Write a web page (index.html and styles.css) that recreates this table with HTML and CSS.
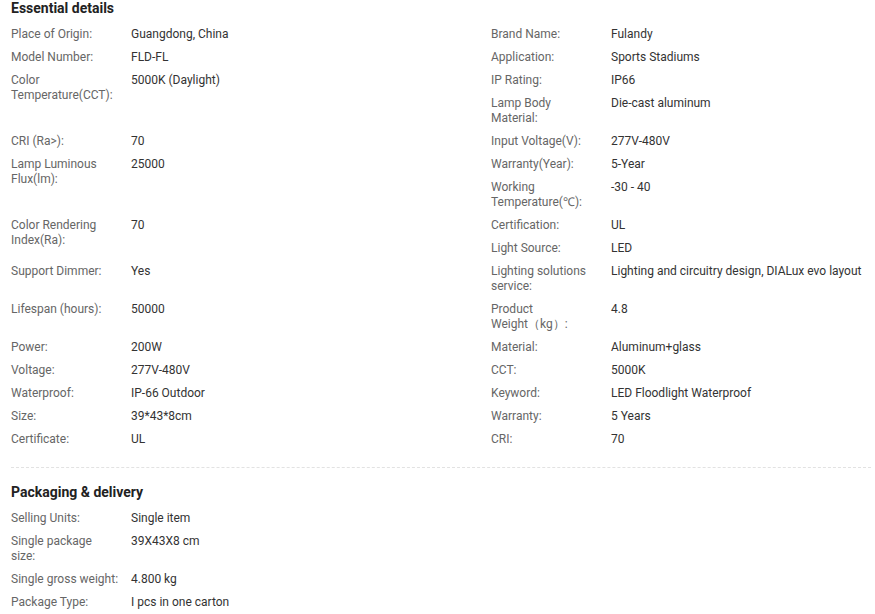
FILE: index.html
```html
<!DOCTYPE html>
<html lang="en">
<head>
<meta charset="utf-8">
<title>Product details</title>
<link rel="stylesheet" href="styles.css">
</head>
<body>
<div class="page">
  <section class="section">
    <h2 class="title">Essential details</h2>
    <div class="rows">
      <div class="row">
        <div class="col"><div class="item"><span class="label">Place of Origin:</span><span class="value">Guangdong, China</span></div></div>
        <div class="col"><div class="item"><span class="label">Brand Name:</span><span class="value">Fulandy</span></div></div>
      </div>
      <div class="row">
        <div class="col"><div class="item"><span class="label">Model Number:</span><span class="value">FLD-FL</span></div></div>
        <div class="col"><div class="item"><span class="label">Application:</span><span class="value">Sports Stadiums</span></div></div>
      </div>
      <div class="row">
        <div class="col"><div class="item"><span class="label">Color Temperature(CCT):</span><span class="value">5000K (Daylight)</span></div></div>
        <div class="col">
          <div class="item"><span class="label">IP Rating:</span><span class="value">IP66</span></div>
          <div class="item"><span class="label">Lamp Body Material:</span><span class="value">Die-cast aluminum</span></div>
        </div>
      </div>
      <div class="row">
        <div class="col"><div class="item"><span class="label">CRI (Ra&gt;):</span><span class="value">70</span></div></div>
        <div class="col"><div class="item"><span class="label">Input Voltage(V):</span><span class="value">277V-480V</span></div></div>
      </div>
      <div class="row">
        <div class="col"><div class="item"><span class="label">Lamp Luminous Flux(lm):</span><span class="value">25000</span></div></div>
        <div class="col">
          <div class="item"><span class="label">Warranty(Year):</span><span class="value">5-Year</span></div>
          <div class="item"><span class="label">Working Temperature(℃):</span><span class="value">-30 - 40</span></div>
        </div>
      </div>
      <div class="row">
        <div class="col"><div class="item"><span class="label">Color Rendering Index(Ra):</span><span class="value">70</span></div></div>
        <div class="col">
          <div class="item"><span class="label">Certification:</span><span class="value">UL</span></div>
          <div class="item"><span class="label">Light Source:</span><span class="value">LED</span></div>
        </div>
      </div>
      <div class="row">
        <div class="col"><div class="item"><span class="label">Support Dimmer:</span><span class="value">Yes</span></div></div>
        <div class="col"><div class="item"><span class="label">Lighting solutions service:</span><span class="value">Lighting and circuitry design, DIALux evo layout</span></div></div>
      </div>
      <div class="row">
        <div class="col"><div class="item"><span class="label">Lifespan (hours):</span><span class="value">50000</span></div></div>
        <div class="col"><div class="item"><span class="label">Product <span class="nowrap">Weight（kg）:</span></span><span class="value">4.8</span></div></div>
      </div>
      <div class="row">
        <div class="col"><div class="item"><span class="label">Power:</span><span class="value">200W</span></div></div>
        <div class="col"><div class="item"><span class="label">Material:</span><span class="value">Aluminum+glass</span></div></div>
      </div>
      <div class="row">
        <div class="col"><div class="item"><span class="label">Voltage:</span><span class="value">277V-480V</span></div></div>
        <div class="col"><div class="item"><span class="label">CCT:</span><span class="value">5000K</span></div></div>
      </div>
      <div class="row">
        <div class="col"><div class="item"><span class="label">Waterproof:</span><span class="value">IP-66 Outdoor</span></div></div>
        <div class="col"><div class="item"><span class="label">Keyword:</span><span class="value">LED Floodlight Waterproof</span></div></div>
      </div>
      <div class="row">
        <div class="col"><div class="item"><span class="label">Size:</span><span class="value">39*43*8cm</span></div></div>
        <div class="col"><div class="item"><span class="label">Warranty:</span><span class="value">5 Years</span></div></div>
      </div>
      <div class="row">
        <div class="col"><div class="item"><span class="label">Certificate:</span><span class="value">UL</span></div></div>
        <div class="col"><div class="item"><span class="label">CRI:</span><span class="value">70</span></div></div>
      </div>
    </div>
  </section>
  <hr class="divider">
  <section class="section">
    <h2 class="title">Packaging &amp; delivery</h2>
    <div class="rows">
      <div class="row">
        <div class="col"><div class="item"><span class="label">Selling Units:</span><span class="value">Single item</span></div></div>
      </div>
      <div class="row">
        <div class="col"><div class="item"><span class="label">Single package size:</span><span class="value">39X43X8 cm</span></div></div>
      </div>
      <div class="row">
        <div class="col"><div class="item"><span class="label">Single gross weight:</span><span class="value">4.800 kg</span></div></div>
      </div>
      <div class="row">
        <div class="col"><div class="item"><span class="label">Package Type:</span><span class="value">I pcs in one carton</span></div></div>
      </div>
    </div>
  </section>
</div>
</body>
</html>
```

FILE: styles.css
```css
* { box-sizing: border-box; }
html, body {
  margin: 0;
  padding: 0;
  background: #ffffff;
}
body {
  font-family: Roboto, "Liberation Sans", Arial, sans-serif;
  font-size: 12px;
  color: #333333;
}
.page {
  padding: 0 4px 0 11px;
}
.title {
  margin: 0 0 11px 0;
  font-size: 14px;
  line-height: 16px;
  font-weight: 700;
  color: #222222;
}
.rows {
  display: flex;
  flex-direction: column;
}
.row {
  display: grid;
  grid-template-columns: 480px 1fr;
}
.col {
  display: flex;
  flex-direction: column;
}
.item {
  display: flex;
  line-height: 15px;
  padding-bottom: 8px;
}
.label {
  flex: 0 0 120px;
  padding-right: 12px;
  color: #666666;
}
.nowrap {
  white-space: nowrap;
}
.value {
  flex: 1 1 auto;
  color: #333333;
}
.divider {
  margin: 12px 0 16px 0;
  border: 0;
  border-top: 1px dashed #e2e2e2;
  height: 0;
}
```
